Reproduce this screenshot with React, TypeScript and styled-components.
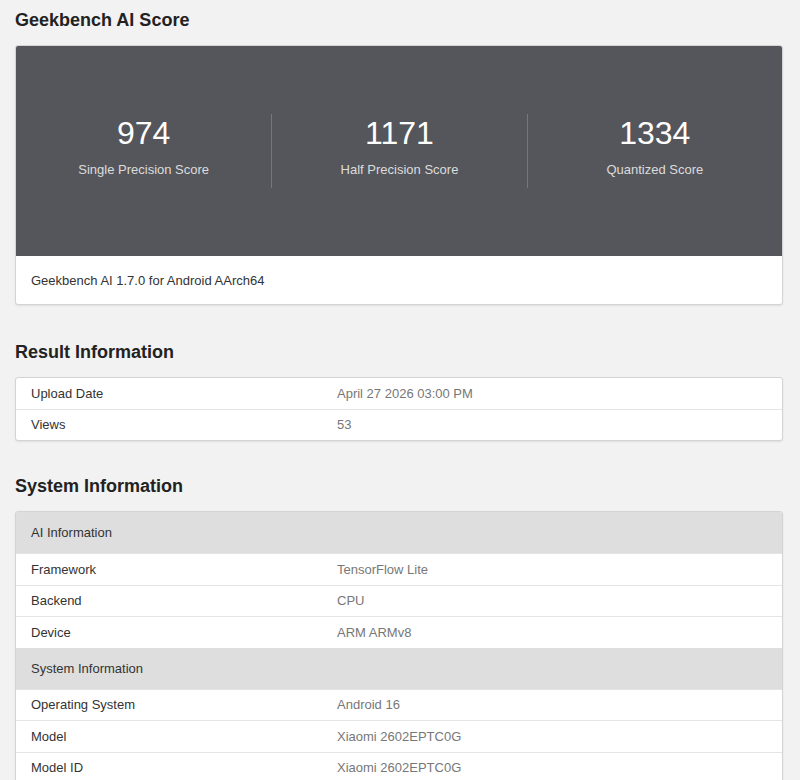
import React from "react";
import styled, { createGlobalStyle } from "styled-components";

const Global = createGlobalStyle`
  body {
    margin: 0;
    background: #f2f2f2;
    font-family: "Liberation Sans", Arial, sans-serif;
    color: #222;
  }
`;

const Page = styled.div`
  padding: 0 17px 0 15px;
`;

const Title = styled.h2`
  margin: 0;
  font-size: 18px;
  font-weight: bold;
  color: #222;
  line-height: 24px;
  padding: ${(p: { $top: number }) => p.$top}px 0 13px;
`;

const Card = styled.div`
  background: #fff;
  border: 1px solid #d4d4d4;
  border-radius: 3px;
  overflow: hidden;
  box-shadow: 0 1px 2px rgba(0, 0, 0, 0.08);
`;

const ScoreArea = styled.div`
  background: #55565b;
  height: 210px;
  display: grid;
  grid-template-columns: repeat(3, 1fr);
  align-items: center;
`;

const Score = styled.div`
  text-align: center;
  color: #fff;
  padding-top: 2px;
  border-left: ${(p: { $first?: boolean }) => (p.$first ? "none" : "1px solid #76777b")};
  height: 72px;
  display: flex;
  flex-direction: column;
`;

const Num = styled.div`
  font-size: 32px;
  line-height: 34px;
`;

const Label = styled.div`
  font-size: 13px;
  line-height: 15px;
  color: #dcdcdc;
  margin-top: 12px;
`;

const CardFooter = styled.div`
  height: 48px;
  display: flex;
  align-items: center;
  padding-left: 15px;
  font-size: 13px;
  color: #333;
`;

const Table = styled.div`
  background: #fff;
  border: 1px solid #d4d4d4;
  border-radius: 3px;
  overflow: hidden;
  box-shadow: 0 1px 2px rgba(0, 0, 0, 0.08);
`;

const Row = styled.div`
  display: grid;
  grid-template-columns: 306px 1fr;
  height: 30.5px;
  align-items: center;
  font-size: 13px;
  border-top: 1px solid #e4e4e4;
  &:first-child { border-top: none; }
  padding-left: 15px;
`;

const Key = styled.div`
  color: #333;
`;

const Value = styled.div`
  color: #777;
`;

const Head = styled.div`
  height: 41px;
  background: #dedede;
  display: flex;
  align-items: center;
  padding-left: 15px;
  font-size: 13px;
  color: #333;
`;

const scores = [
  ["974", "Single Precision Score"],
  ["1171", "Half Precision Score"],
  ["1334", "Quantized Score"],
];

const system: [string, [string, string][]][] = [
  ["AI Information", [["Framework", "TensorFlow Lite"], ["Backend", "CPU"], ["Device", "ARM ARMv8"]]],
  [
    "System Information",
    [
      ["Operating System", "Android 16"],
      ["Model", "Xiaomi 2602EPTC0G"],
      ["Model ID", "Xiaomi 2602EPTC0G"],
    ],
  ],
];

export default function App() {
  return (
    <Page>
      <Global />
      <Title $top={8}>Geekbench AI Score</Title>
      <Card>
        <ScoreArea>
          {scores.map(([n, l], i) => (
            <Score key={l} $first={i === 0}>
              <Num>{n}</Num>
              <Label>{l}</Label>
            </Score>
          ))}
        </ScoreArea>
        <CardFooter>Geekbench AI 1.7.0 for Android AArch64</CardFooter>
      </Card>
      <Title $top={35}>Result Information</Title>
      <Table>
        <Row><Key>Upload Date</Key><Value>April 27 2026 03:00 PM</Value></Row>
        <Row><Key>Views</Key><Value>53</Value></Row>
      </Table>
      <Title $top={33}>System Information</Title>
      <Table>
        {system.map(([h, rows]) => (
          <React.Fragment key={h}>
            <Head>{h}</Head>
            {rows.map(([k, v]) => (
              <Row key={k}><Key>{k}</Key><Value>{v}</Value></Row>
            ))}
          </React.Fragment>
        ))}
      </Table>
    </Page>
  );
}
